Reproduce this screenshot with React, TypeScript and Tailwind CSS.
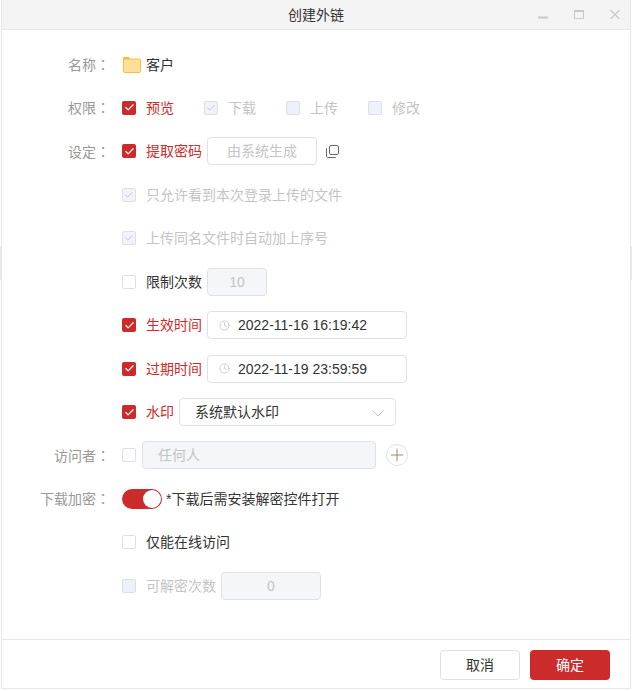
import React from 'react';
import { Clock, Plus, Check } from 'lucide-react';

const RED = 'bg-[#cc2b2b]';

type BoxProps = { state: 'on' | 'off' | 'disabled' | 'disabledOn' };

const Box: React.FC<BoxProps> = ({ state }) => {
  if (state === 'on') {
    return (
      <span className={`flex h-[14px] w-[14px] shrink-0 items-center justify-center rounded-[2px] ${RED}`}>
        <Check className="h-[11px] w-[11px] text-white" strokeWidth={2.5} />
      </span>
    );
  }
  if (state === 'disabledOn') {
    return (
      <span className="flex h-[14px] w-[14px] shrink-0 items-center justify-center rounded-[2px] border border-[#dcdfe8] bg-[#f2f3f8]">
        <Check className="h-[10px] w-[10px] text-[#b8bcc4]" strokeWidth={2} />
      </span>
    );
  }
  if (state === 'disabled') {
    return <span className="h-[14px] w-[14px] shrink-0 rounded-[2px] border border-[#dcdfe8] bg-[#eef1fa]" />;
  }
  return <span className="h-[14px] w-[14px] shrink-0 rounded-[2px] border border-[#dcdfe8] bg-white" />;
};

const Row: React.FC<{ label?: string; children: React.ReactNode }> = ({ label, children }) => (
  <div className="flex h-[30px] items-center">
    <div className="w-[120px] shrink-0 pr-[12px] text-right text-[#999]">
      {label && (
        <>
          {label}
          <span className="font-['Noto_Sans_CJK_TC']">：</span>
        </>
      )}
    </div>
    {children}
  </div>
);

const Field: React.FC<{ className: string; children: React.ReactNode }> = ({ className, children }) => (
  <div className={`flex h-[28px] items-center rounded-[4px] border border-[#dfe1ea] ${className}`}>{children}</div>
);

const DateField: React.FC<{ value: string }> = ({ value }) => (
  <Field className="ml-[5px] w-[200px] bg-white pl-[11px] text-[#333]">
    <Clock className="h-[11px] w-[11px] text-[#c0c4cc]" strokeWidth={1.75} />
    <span className="ml-[8px] text-[14px]">{value}</span>
  </Field>
);

const App: React.FC = () => {
  return (
    <div className="h-[691px] w-[632px] bg-white">
      <div
        className="relative mx-[1px] flex h-[689px] w-[630px] flex-col border-x border-b border-[#e8e8e8] bg-white text-[14px] leading-[20px]"
        style={{ fontFamily: '"Liberation Sans", "Noto Sans CJK SC", sans-serif' }}
      >
        {/* resize grips */}
        <div className="absolute -left-[2px] top-[247px] h-[33px] w-[2px] bg-[#e8e8e8]" />
        <div className="absolute -right-[2px] top-[247px] h-[33px] w-[2px] bg-[#e8e8e8]" />

        {/* Title bar */}
        <div className="relative flex h-[30px] shrink-0 items-center justify-center border-b border-[#e8e8e8] bg-[#f4f4f4] text-[#333]">
          创建外链
          <div className="absolute right-[10px] top-[10px] flex items-start gap-[26px]">
            <svg width="10" height="9" viewBox="0 0 10 9" fill="none">
              <path d="M0 7.5 H10" stroke="#c8c8c8" strokeWidth="2" />
            </svg>
            <svg width="10" height="9" viewBox="0 0 10 9" fill="none">
              <path d="M0.5 1 H9.5 V8.5 H0.5 Z" stroke="#c8c8c8" />
              <path d="M0 1 H10" stroke="#c8c8c8" strokeWidth="2" />
            </svg>
            <svg width="10" height="9" viewBox="0 0 10 9" fill="none">
              <path d="M0.5 0 L9.5 9 M9.5 0 L0.5 9" stroke="#c8c8c8" strokeWidth="1.2" />
            </svg>
          </div>
        </div>

        {/* Form */}
        <div className="flex flex-1 flex-col gap-[13.45px] pt-[19.5px]">
          <Row label="名称">
            <svg width="18" height="16" viewBox="0 0 18 16" className="ml-[1px] shrink-0">
              <path d="M0 3 V1 a1 1 0 0 1 1-1 h5 l1.5 2.5 Z" fill="#f7bd42" />
              <rect x="0.5" y="2" width="17" height="13.5" rx="1" fill="#ffe09b" stroke="#f7bd42" />
            </svg>
            <span className="ml-[5px] text-[#333]">客户</span>
          </Row>
          <Row label="权限">
            <Box state="on" />
            <span className="ml-[10px] w-[58px] text-[#cc2b2b]">预览</span>
            <Box state="disabledOn" />
            <span className="ml-[10px] w-[58px] text-[#c4c4c4]">下载</span>
            <Box state="disabled" />
            <span className="ml-[10px] w-[58px] text-[#c4c4c4]">上传</span>
            <Box state="disabled" />
            <span className="ml-[10px] text-[#c4c4c4]">修改</span>
          </Row>
          <Row label="设定">
            <Box state="on" />
            <span className="ml-[10px] text-[#cc2b2b]">提取密码</span>
            <Field className="ml-[5px] w-[110px] justify-center bg-white text-[#c4c4c4]">由系统生成</Field>
            <svg width="13" height="13" viewBox="0 0 13 13" fill="none" stroke="#666" className="ml-[9px]">
              <rect x="3.5" y="0.5" width="9" height="9" rx="1.5" />
              <path d="M1 3 C0.7 3.2 0.5 3.5 0.5 4 V11 C0.5 11.8 1.2 12.5 2 12.5 H9 C9.5 12.5 9.8 12.3 10 12" />
            </svg>
          </Row>
          <Row>
            <Box state="disabledOn" />
            <span className="ml-[10px] text-[#c4c4c4]">只允许看到本次登录上传的文件</span>
          </Row>
          <Row>
            <Box state="disabledOn" />
            <span className="ml-[10px] text-[#c4c4c4]">上传同名文件时自动加上序号</span>
          </Row>
          <Row>
            <Box state="off" />
            <span className="ml-[10px] text-[#333]">限制次数</span>
            <Field className="ml-[5px] w-[60px] justify-center bg-[#f5f6fa] text-[#c4c4c4]">10</Field>
          </Row>
          <Row>
            <Box state="on" />
            <span className="ml-[10px] text-[#cc2b2b]">生效时间</span>
            <DateField value="2022-11-16 16:19:42" />
          </Row>
          <Row>
            <Box state="on" />
            <span className="ml-[10px] text-[#cc2b2b]">过期时间</span>
            <DateField value="2022-11-19 23:59:59" />
          </Row>
          <Row>
            <Box state="on" />
            <span className="ml-[10px] text-[#cc2b2b]">水印</span>
            <Field className="ml-[5px] w-[217px] justify-between bg-white pl-[15px] pr-[11px] text-[#333]">
              系统默认水印
              <svg width="12" height="7" viewBox="0 0 12 7" fill="none" stroke="#c4c4c4" className="mt-[2px]">
                <path d="M0.5 0.5 L6 6 L11.5 0.5" />
              </svg>
            </Field>
          </Row>
          <Row label="访问者">
            <Box state="off" />
            <Field className="ml-[6px] w-[234px] bg-[#f5f6fa] pl-[15px] text-[#c4c4c4]">任何人</Field>
            <span className="ml-[10px] flex h-[22px] w-[22px] items-center justify-center rounded-full border border-[#dfe1ea]">
              <Plus className="h-[20px] w-[20px] text-[#9a8a70]" strokeWidth={1.2} />
            </span>
          </Row>
          <Row label="下载加密">
            <span className={`flex h-[20px] w-[40px] shrink-0 items-center justify-end rounded-full pr-[1px] ${RED}`}>
              <span className="h-[18px] w-[18px] rounded-full bg-white" />
            </span>
            <span className="ml-[4px] text-[#333]">*下载后需安装解密控件打开</span>
          </Row>
          <Row>
            <Box state="off" />
            <span className="ml-[10px] text-[#333]">仅能在线访问</span>
          </Row>
          <Row>
            <Box state="disabled" />
            <span className="ml-[10px] text-[#c4c4c4]">可解密次数</span>
            <Field className="ml-[5px] w-[100px] justify-center bg-[#f5f6fa] text-[#c4c4c4]">0</Field>
          </Row>
        </div>

        {/* Footer */}
        <div className="flex h-[49px] shrink-0 items-start justify-end gap-[10px] border-t border-[#e8e8e8] pr-[20px] pt-[10px]">
          <button className="h-[30px] w-[80px] rounded-[4px] border border-[#dfe1ea] bg-white text-[#333]">取消</button>
          <button className={`h-[30px] w-[80px] rounded-[4px] text-white ${RED}`}>确定</button>
        </div>
      </div>
    </div>
  );
};

export default App;
